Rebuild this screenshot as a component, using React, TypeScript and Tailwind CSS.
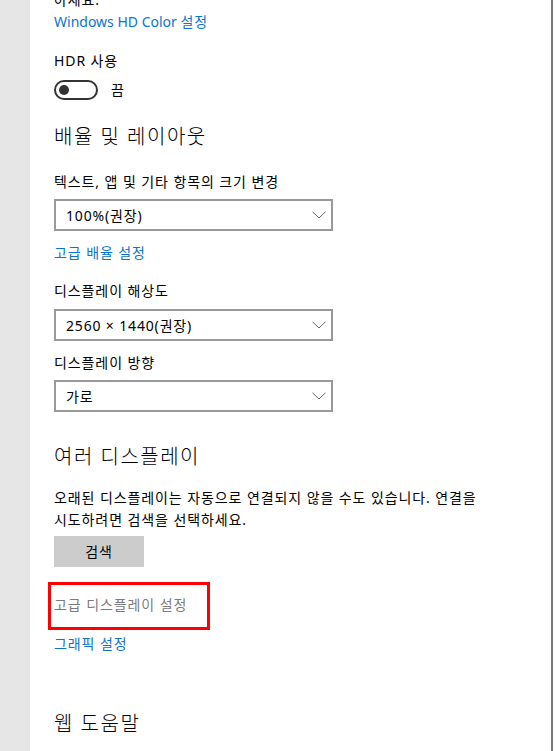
const font = { fontFamily: '"Segoe UI", "Noto Sans", "Noto Sans CJK KR", sans-serif' };

function Chevron() {
  return (
    <svg width="14" height="8" viewBox="0 0 14 8" fill="none" className="text-[#666666]">
      <polyline points="0.5,0.8 7,7 13.5,0.8" stroke="currentColor" strokeWidth="1" />
    </svg>
  );
}

function Select({ value }: { value: string }) {
  return (
    <div className="w-[279px] h-[32px] border-2 border-[#999999] bg-white flex items-center justify-between pl-[10px] pr-[5px] text-[14px] tracking-[0.06em] text-black">
      <span>{value}</span>
      <Chevron />
    </div>
  );
}

export default function App() {
  return (
    <div className="h-[751px] w-[555px] flex overflow-hidden bg-white text-black" style={font}>
      <div className="w-[30px] bg-[#e6e6e6] flex-shrink-0" />

      <div className="flex-1 pl-[24px] flex flex-col items-start text-[14px] tracking-[0.065em]">
        <p className="mt-[-10px] h-[20px] leading-[20px]">아세요.</p>

        <a className="mt-[2px] h-[20px] leading-[20px] text-[#0a74cf] tracking-normal">
          Windows HD Color <span className="tracking-[0.06em]">설정</span>
        </a>

        <p className="mt-[19px] h-[20px] leading-[20px]">HDR 사용</p>

        {/* 토글 */}
        <div className="mt-[9px] h-[20px] flex items-center gap-[13px]">
          <div className="w-[44px] h-[20px] rounded-full border-2 border-[#333333] flex items-center pl-[3px]">
            <div className="w-[10px] h-[10px] rounded-full bg-[#333333]" />
          </div>
          <span className="leading-[20px]">끔</span>
        </div>

        <h2 className="mt-[23px] h-[28px] leading-[28px] text-[20px] font-light tracking-[0.075em]">배율 및 레이아웃</h2>

        <p className="mt-[21px] h-[20px] leading-[20px]">텍스트, 앱 및 기타 항목의 크기 변경</p>
        <div className="mt-[7px]">
          <Select value="100%(권장)" />
        </div>
        <a className="mt-[12px] h-[20px] leading-[20px] text-[#0a74cf]">고급 배율 설정</a>

        <p className="mt-[18px] h-[20px] leading-[20px]">디스플레이 해상도</p>
        <div className="mt-[8px]">
          <Select value="2560 × 1440(권장)" />
        </div>

        <p className="mt-[12px] h-[20px] leading-[20px]">디스플레이 방향</p>
        <div className="mt-[7px]">
          <Select value="가로" />
        </div>

        <h2 className="mt-[31px] h-[28px] leading-[28px] text-[20px] font-light tracking-[0.075em]">여러 디스플레이</h2>

        <p className="mt-[16px] w-[460px] leading-[22px] break-keep">
          오래된 디스플레이는 자동으로 연결되지 않을 수도 있습니다. 연결을 시도하려면 검색을 선택하세요.
        </p>

        <button className="mt-[5px] w-[90px] h-[31px] bg-[#cccccc] text-black tracking-[0.06em]">검색</button>

        <div className="mt-[15px] -ml-[6px] w-[162px] h-[48px] border-[3px] border-[#ff0000] pl-[3px] pt-[10px]">
          <span className="block h-[20px] leading-[20px] text-[#7a7a7a]">고급 디스플레이 설정</span>
        </div>

        <a className="mt-[4px] h-[20px] leading-[20px] text-[#0a74cf]">그래픽 설정</a>

        <h2 className="mt-[56px] h-[28px] leading-[28px] text-[20px] font-light tracking-[0.075em]">웹 도움말</h2>
      </div>

      <div className="w-[2px] bg-[#7a7a7a] flex-shrink-0 mr-[2px]" />
    </div>
  );
}
